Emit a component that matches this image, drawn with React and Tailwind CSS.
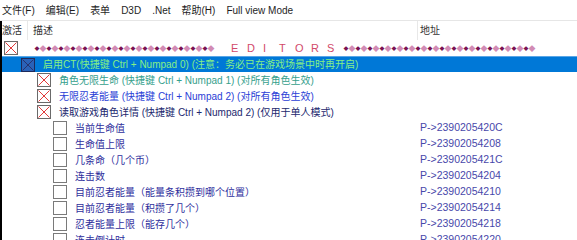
import React from 'react';

const menus = ['文件(F)', '编辑(E)', '表单', 'D3D', '.Net', '帮助(H)', 'Full view Mode'];

const rows = [
  { level: 1, box: 'blue', text: '启用CT(快捷键 Ctrl + Numpad 0) (注意：务必已在游戏场景中时再开启)', color: 'text-[#86f086]', selected: true },
  { level: 2, box: 'red', text: '角色无限生命 (快捷键 Ctrl + Numpad 1) (对所有角色生效)', color: 'text-[#35a08c]' },
  { level: 2, box: 'red', text: '无限忍者能量 (快捷键 Ctrl + Numpad 2) (对所有角色生效)', color: 'text-[#2a3ed6]' },
  { level: 2, box: 'red', text: '读取游戏角色详情 (快捷键 Ctrl + Numpad 2) (仅用于单人模式)', color: 'text-[#22286e]' },
  { level: 3, box: 'empty', text: '当前生命值', addr: 'P->2390205420C' },
  { level: 3, box: 'empty', text: '生命值上限', addr: 'P->23902054208' },
  { level: 3, box: 'empty', text: '几条命（几个币）', addr: 'P->2390205421C' },
  { level: 3, box: 'empty', text: '连击数', addr: 'P->23902054204' },
  { level: 3, box: 'empty', text: '目前忍者能量（能量条积攒到哪个位置）', addr: 'P->23902054210' },
  { level: 3, box: 'empty', text: '目前忍者能量（积攒了几个）', addr: 'P->23902054214' },
  { level: 3, box: 'empty', text: '忍者能量上限（能存几个）', addr: 'P->23902054218' },
  { level: 3, box: 'empty', text: '连击倒计时', addr: 'P->23902054220' },
];

const indents = ['pl-[2px]', 'pl-[19px]', 'pl-[35px]', 'pl-[51px]'];
const textWidths = ['w-[0px]', 'w-[377px]', 'w-[361px]', 'w-[345px]'];

const CheckBox = ({ kind }) => {
  if (kind === 'empty') {
    return (
      <svg width="14" height="14" viewBox="0 0 14 14" className="shrink-0">
        <rect x="0.5" y="0.5" width="13" height="13" fill="#fff" stroke="#7a7a7a" />
      </svg>
    );
  }
  const line = kind === 'blue' ? '#27336e' : '#e23a3a';
  const border = kind === 'blue' ? '#1d2a5c' : '#6a6a6a';
  return (
    <svg width="14" height="14" viewBox="0 0 14 14" className="shrink-0">
      <rect x="0.5" y="0.5" width="13" height="13" fill={kind === 'blue' ? '#2a62b8' : '#fff'} stroke={border} />
      <path d="M1.5 1.5 L12.5 12.5 M12.5 1.5 L1.5 12.5" stroke={line} strokeWidth="1" />
    </svg>
  );
};

const Diamonds = ({ count }) => (
  <div className="flex items-center shrink-0">
    {Array.from({ length: count }).map((_, i) => (
      <span
        key={i}
        className={`w-[6px] shrink-0 flex justify-center leading-none ${i % 2 ? 'text-[7px] text-[#d28bb4]' : 'text-[5px] text-[#7a1452]'}`}
      >
        ◆
      </span>
    ))}
  </div>
);

export default function App() {
  return (
    <div
      className="w-[577px] h-[240px] bg-white overflow-hidden flex flex-col text-[10px] text-[#1e1e1e]"
      style={{ fontFamily: '"Liberation Sans", "Noto Sans CJK SC", sans-serif' }}
    >
      {/* Menu */}
      <div className="h-[21px] shrink-0 flex items-center gap-[11px] pl-[2px] border-b border-[#e6e6e6]">
        {menus.map((m) => (
          <span key={m}>{m}</span>
        ))}
      </div>

      <div className="flex-1 border-l-2 border-black flex flex-col">
        {/* Header */}
        <div className="h-[19px] shrink-0 flex items-center text-[#333]">
          <div className="w-[26px] h-full flex items-center border-r border-[#e8e8e8]">激活</div>
          <div className="w-[390px] h-full flex items-center pl-[5px] border-r border-[#e8e8e8]">描述</div>
          <div className="pl-[2px]">地址</div>
        </div>

        {/* Editors row */}
        <div className="h-[16px] shrink-0 flex items-center pl-[2px]">
          <CheckBox kind="red" />
          <div className="ml-[16px]">
            <Diamonds count={30} />
          </div>
          <div className="ml-[17px] flex text-[11px] text-[#d24a6a]">
            {'EDITORS'.split('').map((c, i) => (
              <span key={i} className="w-[16px]">{c}</span>
            ))}
          </div>
          <Diamonds count={32} />
        </div>

        {rows.map((r, i) => (
          <div
            key={i}
            className={`h-[16px] shrink-0 flex items-center ${indents[r.level]} ${r.selected ? 'bg-[#0078d7] border-t border-[#5aa6e6]' : ''}`}
          >
            <CheckBox kind={r.box} />
            <span className={`ml-[8px] shrink-0 whitespace-nowrap ${textWidths[r.level]} ${r.color || 'text-[#2e2e9c]'}`}>{r.text}</span>
            {r.addr && <span className="text-[10.5px] text-[#4848aa]">{r.addr}</span>}
          </div>
        ))}
      </div>
    </div>
  );
}
